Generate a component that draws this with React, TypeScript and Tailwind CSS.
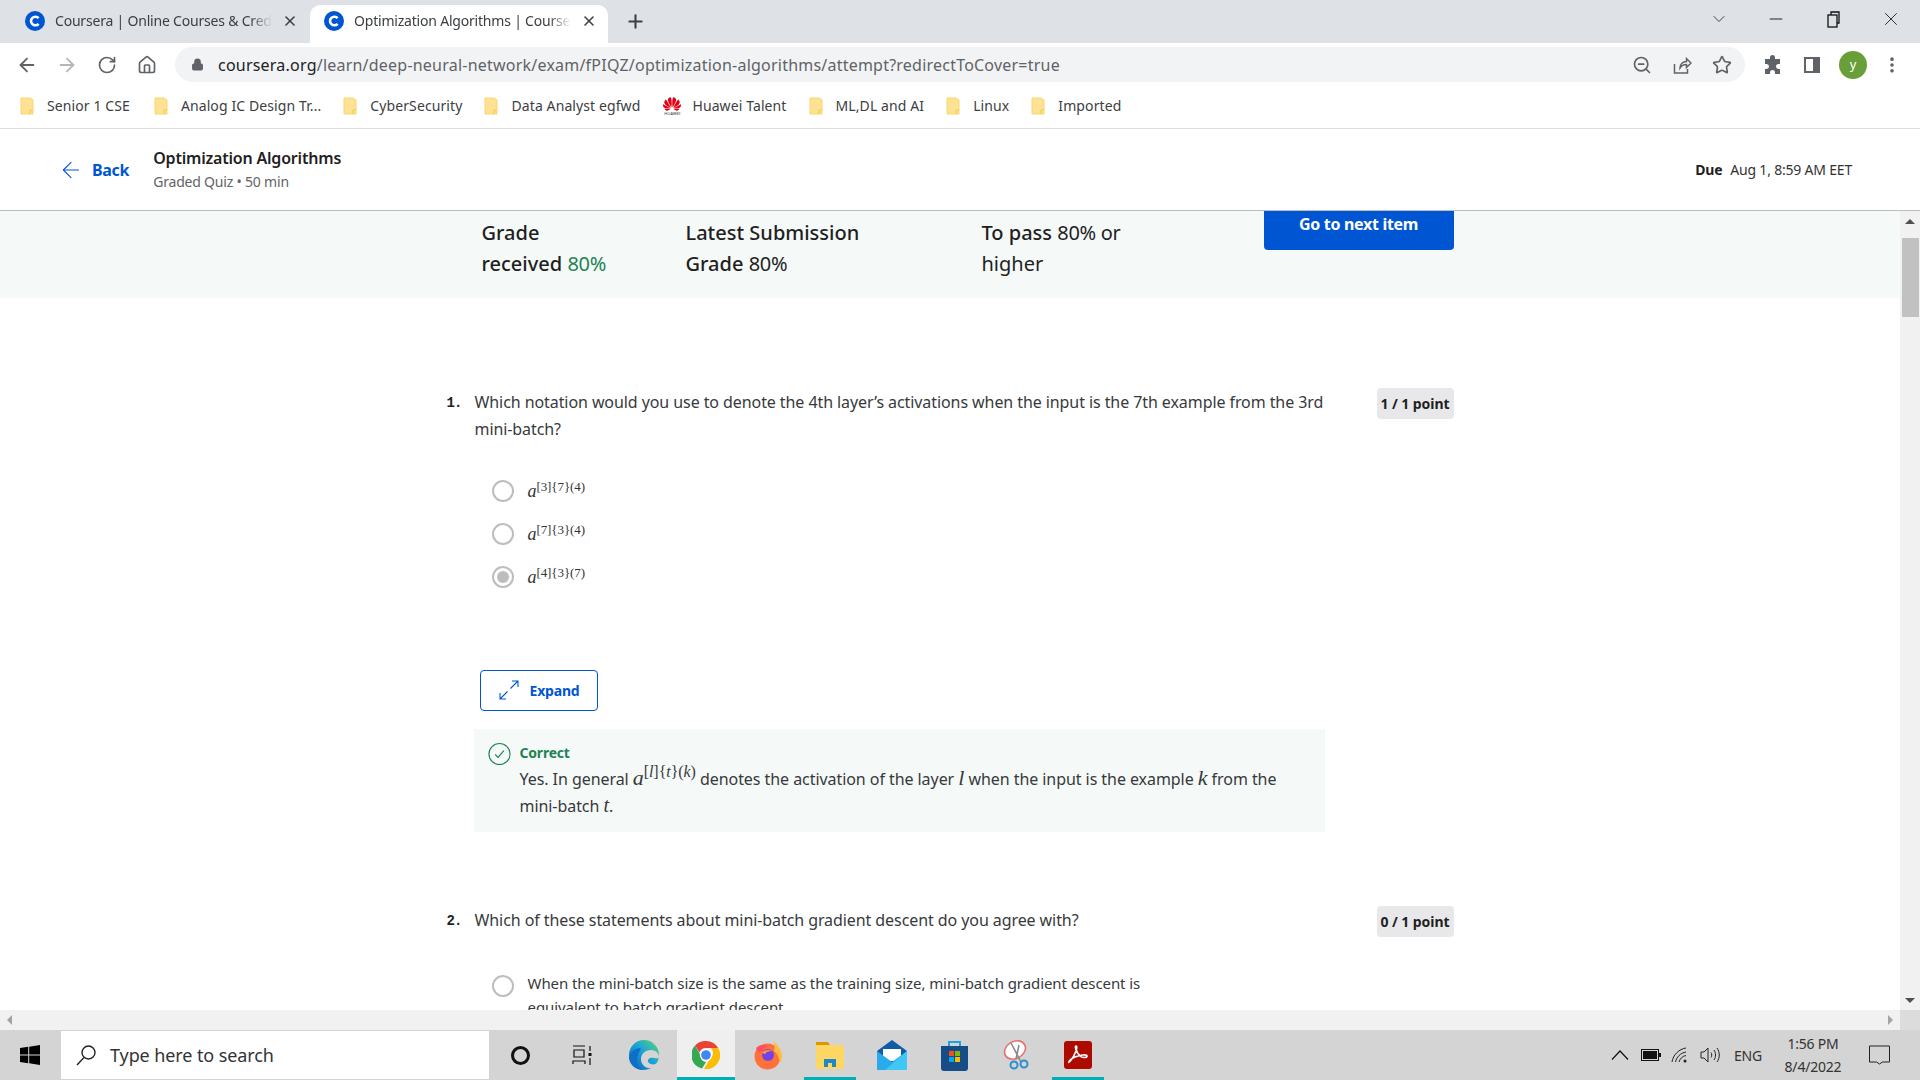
import { ArrowLeft, ArrowRight, RotateCw, Home, Lock, ZoomOut, Star, Plus, X, ChevronDown, Minus, MoreVertical } from "lucide-react";
import { SiHuawei } from "react-icons/si";

const BOOKMARKS = ["Senior 1 CSE", "Analog IC Design Tr...", "CyberSecurity", "Data Analyst egfwd", "Huawei Talent", "ML,DL and AI", "Linux", "Imported"];

function CourseraIcon() {
  return (
    <svg width="20" height="20" viewBox="0 0 20 20" className="shrink-0">
      <circle cx="10" cy="10" r="10" fill="#0056d2" />
      <path d="M13.6 7.2a4.3 4.3 0 1 0 0 5.6" fill="none" stroke="#fff" strokeWidth="2.6" />
    </svg>
  );
}

function Folder() {
  return (
    <svg width="14" height="18" viewBox="0 0 14 18" className="shrink-0">
      <path d="M1 1h9l3 2v14H1z" fill="#fde293" stroke="#f9d76d" strokeWidth="1" />
      <path d="M10 17v-4h3" fill="none" stroke="#f2c94c" strokeWidth="1" />
    </svg>
  );
}

function Tab({ title, active }: { title: string; active?: boolean }) {
  return (
    <div className={`flex h-[38px] w-[298px] items-center pb-[7px] ${active ? "rounded-t-[10px] bg-white pl-[14px]" : "pl-[25px]"}`}>
      <CourseraIcon />
      <span
        className="ml-[10px] w-[217px] overflow-hidden text-[14px] tracking-[-0.2px] whitespace-nowrap text-[#3c4043]"
        style={{ maskImage: "linear-gradient(to right, black 90%, transparent)" }}
      >
        {title}
      </span>
      <X className="ml-[10px] text-[#3c4043]" size={16} strokeWidth={2.4} />
    </div>
  );
}

function Radio({ checked }: { checked?: boolean }) {
  return (
    <span className="flex h-[22px] w-[22px] shrink-0 items-center justify-center rounded-full border-2 border-[#bdbdbd]">
      {checked && <span className="h-[12px] w-[12px] rounded-full bg-[#bdbdbd]" />}
    </span>
  );
}

function Notation({ sup }: { sup: string }) {
  return (
    <span className="pt-[2px] font-['Liberation_Serif',serif] text-[#333]">
      <i className="text-[18px]">a</i>
      <sup className="text-[13px]">{sup}</sup>
    </span>
  );
}

function Badge({ text }: { text: string }) {
  return (
    <span className="-mt-[1px] flex h-[31px] w-[77px] shrink-0 items-center justify-center rounded-[4px] bg-[#e8e8ea] pb-[1px] text-[14px] font-bold text-[#1f1f1f]">
      {text}
    </span>
  );
}

function TaskIcon({ children, active, bar }: { children: React.ReactNode; active?: boolean; bar?: boolean }) {
  return (
    <div className="relative flex h-full w-[62px] items-center justify-center">
      {active && <span className="absolute inset-y-0 inset-x-[2px] bg-[#efefef]" />}
      <span className="relative flex">{children}</span>
      {bar && <span className={`absolute bottom-0 h-[3px] bg-[#00adb8] ${active ? "inset-x-[2px]" : "inset-x-[5px]"}`} />}
    </div>
  );
}

export default function App() {
  return (
    <div className="flex h-screen w-full flex-col overflow-hidden bg-white font-['Noto_Sans',sans-serif] text-[#1f1f1f]">
      {/* browser tab strip */}
      <div className="flex h-[43px] shrink-0 items-end bg-[#dee1e6]">
        <div className="w-[310px]">
          <Tab title="Coursera | Online Courses & Credentials" />
        </div>
        <Tab active title="Optimization Algorithms | Coursera" />
        <Plus className="mb-[11px] ml-[17px] text-[#3c4043]" size={21} strokeWidth={2.4} />
        <div className="mb-[13px] ml-auto flex items-center gap-[37px] pr-[18px] text-[#222]">
          <ChevronDown size={20} strokeWidth={1} />
          <Minus size={20} strokeWidth={1.2} />
          <svg width="20" height="20" viewBox="0 0 20 20" fill="none" stroke="#111" strokeWidth="1.3">
            <rect x="5" y="6" width="9" height="12" />
            <path d="M8 6V3h8v11h-2" />
          </svg>
          <X size={22} strokeWidth={1} />
        </div>
      </div>

      {/* toolbar */}
      <div className="flex h-[43px] shrink-0 items-center bg-white">
        <div className="flex w-[175px] items-center gap-[18px] pl-[16px] text-[#5f6368]">
          <ArrowLeft size={22} strokeWidth={2} />
          <ArrowRight size={22} strokeWidth={2} className="text-[#b5b7ba]" />
          <RotateCw size={20} strokeWidth={2} className="ml-[1px]" />
          <Home size={20} strokeWidth={2} className="ml-[2px]" />
        </div>
        <div className="flex h-[35px] w-[1570px] items-center rounded-full bg-[#f1f3f4] pl-[16px]">
          <Lock size={13} className="text-[#5f6368]" fill="#5f6368" />
          <span className="ml-[14px] text-[16px] tracking-[0.22px] whitespace-nowrap text-[#5f6368]">
            <span className="text-[#202124]">coursera.org</span>/learn/deep-neural-network/exam/fPIQZ/optimization-algorithms/attempt?redirectToCover=true
          </span>
          <div className="ml-auto flex items-center gap-[20px] pr-[13px] text-[#5f6368]">
            <ZoomOut size={20} strokeWidth={2} />
            <svg width="20" height="20" viewBox="0 0 20 20" fill="none" stroke="#5f6368" strokeWidth="1.5">
              <path d="M2.5 9v9h13v-4M8 13c0-4 3-6.500 6.500-6.500V3.500L19 8l-4.500 4.500V9.500C11.500 9.500 9.500 10.500 8 13z" />
            </svg>
            <Star size={20} strokeWidth={2} />
          </div>
        </div>
        <div className="flex items-center pl-[18px] text-[#5f6368]">
          <svg width="20" height="20" viewBox="0 0 20 20" fill="#5f6368">
            <path d="M7 2.500a2.500 2.500 0 0 1 5 0V4h5v5h-1.500a2.500 2.500 0 0 0 0 5H17v5h-5v-1.500a2.500 2.500 0 0 0-5 0V19H2v-5h1.500a2.500 2.500 0 0 0 0-5H2V4h5z" />
          </svg>
          <svg width="18" height="18" viewBox="0 0 18 18" className="ml-[20px]">
            <rect x="1" y="1" width="16" height="16" fill="#5f6368" />
            <rect x="3" y="3" width="7" height="12" fill="#fff" />
          </svg>
          <span className="ml-[18px] flex h-[28px] w-[28px] items-center justify-center rounded-full bg-[#689f38] text-[13px] text-white">y</span>
          <MoreVertical size={20} strokeWidth={2.4} className="ml-[15px]" />
        </div>
      </div>

      {/* bookmarks */}
      <div className="flex h-[43px] shrink-0 items-center gap-[22px] border-b border-[#dadce0] pb-[3px] pl-[20px] text-[14px] tracking-[0.1px] text-[#3c4043]">
        {BOOKMARKS.map((b) => (
          <div key={b} className="flex items-center gap-[13px] whitespace-nowrap first:mr-[2px]">
            {b === "Huawei Talent" ? (
              <span className="-mr-[3px] flex w-[20px] flex-col items-center">
                <SiHuawei className="text-[#e60012]" size={18} />
                <span className="-mt-[1px] text-[4px] leading-[4px] text-[#333]">HUAWEI</span>
              </span>
            ) : (
              <Folder />
            )}
            {b}
          </div>
        ))}
      </div>

      {/* coursera header */}
      <div className="flex h-[82px] shrink-0 items-center border-b border-[#bdbdbd] pl-[61px] pr-[68px]">
        <ArrowLeft size={26} strokeWidth={1} className="-ml-[3px] text-[#0056d2]" />
        <span className="ml-[8px] text-[16px] font-bold tracking-[-0.3px] text-[#0056d2]">Back</span>
        <div className="ml-[24px] pt-[1px]">
          <div className="text-[16px] leading-[24px] font-semibold tracking-[-0.2px]">Optimization Algorithms</div>
          <div className="text-[14px] leading-[24px] tracking-[-0.2px] text-[#636363]">Graded Quiz • 50 min</div>
        </div>
        <div className="ml-auto text-[14px] tracking-[-0.2px] text-[#333]">
          <b className="mr-[8px] text-[#1f1f1f]">Due</b>Aug 1, 8:59 AM EET
        </div>
      </div>

      {/* page content */}
      <div className="flex min-h-0 flex-1">
        <div className="min-w-0 flex-1 overflow-hidden">
          <div className="bg-[#f5f9f8]">
            <div className="mx-auto flex h-[87px] w-[1007px] pl-[35px] text-[20px] leading-[31px] text-[#1f1f1f]">
              <div className="w-[204px] pt-[6px] font-medium">
                Grade
                <br />
                received <span className="font-normal tracking-[-0.3px] text-[#1f8354]">80%</span>
              </div>
              <div className="w-[296px] pt-[6px] font-medium">
                Latest Submission
                <br />
                Grade <span className="font-normal tracking-[-0.3px]">80%</span>
              </div>
              <div className="w-[282px] pt-[6px] font-medium">
                To pass <span className="font-normal tracking-[-0.3px]">80% or</span>
                <br />
                <span className="font-normal">higher</span>
              </div>
              <div className="flex h-[39px] w-[190px] shrink-0 justify-center rounded-b-[4px] bg-[#0056d2] pt-[2px] text-[16px] leading-[22px] font-bold tracking-[-0.3px] text-white">
                Go to next item
              </div>
            </div>
          </div>

          <div className="mx-auto w-[1007px] text-[16px] leading-[27px] tracking-[-0.08px] text-[#373a3c]">
            {/* question 1 */}
            <div className="flex pt-[91px]">
              <span className="w-[28px] shrink-0 pt-[1px] font-['Liberation_Mono',monospace] text-[14px] font-bold tracking-[-1px] text-[#1f1f1f]">1.</span>
              <p className="w-[855px] shrink-0">
                Which notation would you use to denote the 4th layer’s activations when the input is the 7th example from the 3rd{" "}
                <span className="whitespace-nowrap">mini-batch?</span>
              </p>
              <div className="ml-auto">
                <Badge text="1 / 1 point" />
              </div>
            </div>
            <div className="mt-[26px] pl-[45px]">
              {[
                ["[3]{7}(4)", false],
                ["[7]{3}(4)", false],
                ["[4]{3}(7)", true],
              ].map(([sup, checked]) => (
                <div key={sup as string} className="flex h-[43px] items-center gap-[14px]">
                  <Radio checked={checked as boolean} />
                  <Notation sup={sup as string} />
                </div>
              ))}
            </div>
            <button className="ml-[33px] mt-[72px] flex h-[41px] w-[118px] items-center justify-center gap-[10px] rounded-[4px] border border-[#0056d2] pb-[1px] text-[14px] font-bold tracking-[-0.2px] text-[#0056d2]">
              <svg width="22" height="22" viewBox="0 0 22 22" fill="none" stroke="#0056d2" strokeWidth="1.1">
                <path d="M2 20 9.500 12.500M12.500 9.500 20 2M14 2h6v6M2 14v6h6" />
              </svg>
              Expand
            </button>
            <div className="ml-[27px] mt-[18px] flex h-[103px] w-[851px] bg-[#f5f9f8] pl-[14px] pt-[12px]">
              <svg width="23" height="24" viewBox="0 0 24 24" fill="none" stroke="#1f8354" strokeWidth="1.2" className="mt-[1px] shrink-0">
                <circle cx="12" cy="12" r="11" />
                <path d="M7.500 12.500l3 3 6-7" />
              </svg>
              <div className="ml-[9px] min-w-0">
                <div className="text-[14px] leading-[24px] font-bold tracking-[-0.2px] text-[#1f8354]">Correct</div>
                <p className="mt-[1px] w-[790px] tracking-[-0.06px] whitespace-nowrap">
                  Yes. In general <span className="font-['Liberation_Serif',serif] text-[22px] leading-[20px] italic">a<sup className="text-[16px] not-italic">[<i>l</i>]&#123;<i>t</i>&#125;(<i>k</i>)</sup></span> denotes the activation of the layer{" "}
                  <i className="font-['Liberation_Serif',serif] text-[22px] leading-[20px]">l</i> when the input is the example{" "}
                  <i className="font-['Liberation_Serif',serif] text-[22px] leading-[20px]">k</i> from the
                  <br />
                  mini-batch <i className="font-['Liberation_Serif',serif] text-[20px] leading-[20px]">t</i>.
                </p>
              </div>
            </div>
            {/* question 2 */}
            <div className="mt-[75px] flex">
              <span className="w-[28px] shrink-0 pt-[1px] font-['Liberation_Mono',monospace] text-[14px] font-bold tracking-[-1px] text-[#1f1f1f]">2.</span>
              <p>Which of these statements about mini-batch gradient descent do you agree with?</p>
              <div className="ml-auto">
                <Badge text="0 / 1 point" />
              </div>
            </div>
            <div className="mt-[38px] flex gap-[14px] pl-[45px] text-[15px] leading-[24px] tracking-[-0.07px]">
              <Radio />
              <p className="-mt-[4px] w-[640px]">
                When the mini-batch size is the same as the training size, mini-batch gradient descent is equivalent to batch gradient descent
              </p>
            </div>
          </div>
        </div>

        {/* vertical scrollbar */}
        <div className="flex w-[20px] shrink-0 flex-col items-center bg-[#f1f1f1]">
          <span className="mt-[8px] h-0 w-0 border-x-[5px] border-b-[5px] border-x-transparent border-b-[#505050]" />
          <span className="mt-[14px] h-[79px] w-[17px] bg-[#c1c1c1]" />
          <span className="mb-[7px] mt-auto h-0 w-0 border-x-[5px] border-t-[5px] border-x-transparent border-t-[#505050]" />
        </div>
      </div>

      {/* horizontal scrollbar */}
      <div className="flex h-[20px] shrink-0 bg-[#dcdcdc]">
        <div className="flex w-[1900px] items-center justify-between bg-[#f1f1f1] px-[7px]">
          <span className="h-0 w-0 border-y-[5px] border-r-[5px] border-y-transparent border-r-[#a3a3a3]" />
          <span className="h-0 w-0 border-y-[5px] border-l-[5px] border-y-transparent border-l-[#a3a3a3]" />
        </div>
      </div>

      {/* windows taskbar */}
      <div className="flex h-[50px] shrink-0 items-center bg-[#d4d4d4] text-[#1a1a1a]">
        <div className="flex h-full w-[61px] items-center justify-center pr-[1px]">
          <svg width="20" height="20" viewBox="0 0 20 20" fill="#000">
            <path d="M0 3l8.200-1.200v7.700H0zM9.200 1.700 20 0v9.500H9.200zM0 10.500h8.200v7.700L0 17zM9.200 10.500H20V20L9.200 18.300z" />
          </svg>
        </div>
        <div className="flex h-[48px] w-[428px] items-center bg-white pl-[14px] text-[18px] tracking-[-0.1px] text-[#333]">
          <svg width="22" height="22" viewBox="0 0 22 22" fill="none" stroke="#222" strokeWidth="1.4">
            <circle cx="13.500" cy="8.500" r="6.500" />
            <path d="M9 13.500 2 21" />
          </svg>
          <span className="ml-[13px]">Type here to search</span>
        </div>
        <TaskIcon>
          <span className="h-[19px] w-[19px] rounded-full border-[3px] border-[#111]" />
        </TaskIcon>
        <TaskIcon>
          <svg width="22" height="22" viewBox="0 0 22 22" fill="none" stroke="#111" strokeWidth="1.2">
            <path d="M2 2h12M2 20v-3h12v3M3 6h10v7H3zM19 2v5M19 14v7" />
            <rect x="17.500" y="9" width="3" height="3" fill="#111" stroke="none" />
          </svg>
        </TaskIcon>
        <TaskIcon>
          <svg width="30" height="30" viewBox="0 0 30 30">
            <defs>
              <linearGradient id="edgeA" x1="0" y1="1" x2="1" y2="0">
                <stop offset="0" stopColor="#0b5fb3" />
                <stop offset="0.55" stopColor="#1ba4d8" />
                <stop offset="1" stopColor="#5fd66c" />
              </linearGradient>
            </defs>
            <circle cx="15" cy="15" r="15" fill="url(#edgeA)" />
            <path d="M30 17c0-4-3.500-7-8-7-6 0-10 4-10 9 0 6 5 10 11 9 4-1 6-3 7-6-3 3-8 3-10 1-2-2-1-4 1-5 3-1 9 2 9-1z" fill="#d4d4d4" />
            <path d="M12 8c-6 0-11 4-12 9 0 6 5 13 14 13-4-2-6-6-6-10s2-8 4-12z" fill="#0d6fc5" />
          </svg>
        </TaskIcon>
        <TaskIcon active bar>
          <svg width="28" height="28" viewBox="0 0 28 28">
            <path d="M14 0a14 14 0 0 1 12.100 7H14a7 7 0 0 0-6.500 4.400L3 4.500A14 14 0 0 1 14 0z" fill="#ea4335" />
            <path d="M3 4.500l6 10.500a6 6 0 0 0 5 6l-4 6.600A14 14 0 0 1 3 4.500z" fill="#34a853" />
            <path d="M26.100 7A14 14 0 0 1 12 28l6.300-10.500A7 7 0 0 0 19 7z" fill="#fbbc04" />
            <circle cx="14" cy="14" r="6.200" fill="#fff" />
            <circle cx="14" cy="14" r="4.800" fill="#4285f4" />
          </svg>
        </TaskIcon>
        <TaskIcon>
          <svg width="30" height="30" viewBox="0 0 30 30">
            <circle cx="14.500" cy="16.500" r="13" fill="#ff7139" />
            <path d="M20 1c4 3 9 9 9 15 0 3-1 5-2 7-1-6-3-10-6-12 1-3 1-7-1-10z" fill="#ffbd3f" />
            <path d="M3 8c3-3 8-4 12-2-3 1-5 3-5 5-3 1-5 2-7-3z" fill="#ff4f5e" />
            <circle cx="15" cy="15" r="6" fill="#7542e5" />
            <path d="M9 13c2-3 7-4 10-2-4 0-6 1-7 3z" fill="#ff9a3c" />
          </svg>
        </TaskIcon>
        <TaskIcon bar>
          <svg width="28" height="28" viewBox="0 0 28 28">
            <path d="M0 1h12l2 3H0z" fill="#d99a00" />
            <rect x="0" y="4" width="28" height="24" fill="#fdd663" />
            <path d="M8 26v-8h12v8h-4v-4h-4v4z" fill="#1e88c9" />
          </svg>
        </TaskIcon>
        <TaskIcon>
          <svg width="30" height="30" viewBox="0 0 30 30">
            <path d="M15 0 30 11v19H0V11z" fill="#0f5ca8" />
            <rect x="6" y="9" width="18" height="12" fill="#fff" />
            <path d="M0 11 15 22 30 11v19H0z" fill="#2aa9ec" />
            <path d="M30 11v19H8z" fill="#3fc8f5" />
          </svg>
        </TaskIcon>
        <TaskIcon>
          <svg width="29" height="31" viewBox="0 0 29 31">
            <path d="M9 7V2h11v5" fill="none" stroke="#1fa1e8" strokeWidth="2" />
            <path d="M1 6h27v22a3 3 0 0 1-3 3H4a3 3 0 0 1-3-3z" fill="#174d86" />
            <rect x="9" y="11" width="5" height="5" fill="#f25022" />
            <rect x="15" y="11" width="5" height="5" fill="#7fba00" />
            <rect x="9" y="17" width="5" height="5" fill="#00a4ef" />
            <rect x="15" y="17" width="5" height="5" fill="#ffb900" />
          </svg>
        </TaskIcon>
        <TaskIcon>
          <svg width="28" height="30" viewBox="0 0 28 30" fill="none">
            <ellipse cx="13" cy="10" rx="11" ry="8.500" fill="#fff" stroke="#e57373" strokeWidth="1.6" transform="rotate(-30 13 10)" />
            <path d="M9 3l10 19M17 5l-3 14" stroke="#8a8a8a" strokeWidth="1.6" />
            <circle cx="12" cy="25" r="3.500" stroke="#2b8fd0" strokeWidth="2" />
            <circle cx="22" cy="24" r="3.500" stroke="#2b8fd0" strokeWidth="2" />
          </svg>
        </TaskIcon>
        <TaskIcon bar>
          <svg width="28" height="28" viewBox="0 0 28 28">
            <rect width="28" height="28" rx="3" fill="#ad0b00" />
            <path d="M5 21c3-2 5-6 7-11 .8-2.500 1-5 0-5-1.500 0 0 6 4 10 2 2 7 2 7 0 0-2-7-1-12 1-3 1-6 4-6 5z" fill="none" stroke="#fff" strokeWidth="1.700" />
          </svg>
        </TaskIcon>

        {/* tray */}
        <div className="ml-auto flex items-center pr-[30px]">
          <svg width="18" height="10" viewBox="0 0 18 10" fill="none" stroke="#111" strokeWidth="1.200">
            <path d="M1 9.500 9 1l8 8.500" />
          </svg>
          <svg width="20" height="12" viewBox="0 0 20 12" className="ml-[12px]">
            <rect x="0.500" y="0.500" width="17" height="11" fill="none" stroke="#111" />
            <rect x="2" y="2" width="14" height="8" fill="#111" />
            <rect x="18" y="4" width="2" height="4" fill="#111" />
          </svg>
          <svg width="18" height="16" viewBox="0 0 18 16" fill="none" stroke="#222" strokeWidth="1" className="ml-[10px]">
            <path d="M1 15C2 8 8 2 15 1M4.500 15c1-5 5-9 10.500-10M8 15c.8-3 3.500-6 7-6.500" />
            <circle cx="14" cy="14" r="1.500" fill="#222" stroke="none" />
          </svg>
          <svg width="21" height="18" viewBox="0 0 21 18" fill="none" stroke="#222" strokeWidth="1" className="ml-[11px]">
            <path d="M1 6h3l4-4v14l-4-4H1zM11 6.500c1 1.500 1 3.500 0 5M14 4c2 3 2 7 0 10M17 2c3 4 3 10 0 14" />
          </svg>
          <span className="ml-[13px] text-[14px] tracking-[-0.2px] text-[#333]">ENG</span>
          <div className="ml-[16px] flex w-[70px] flex-col items-center text-[14px] leading-[23px] tracking-[-0.2px] text-[#333]">
            <span>1:56 PM</span>
            <span>8/4/2022</span>
          </div>
          <svg width="21" height="20" viewBox="0 0 21 20" fill="none" stroke="#222" strokeWidth="1" className="ml-[21px]">
            <path d="M.500 1h20v16h-7l-3 2-3-2h-7z" />
          </svg>
        </div>
      </div>
    </div>
  );
}
